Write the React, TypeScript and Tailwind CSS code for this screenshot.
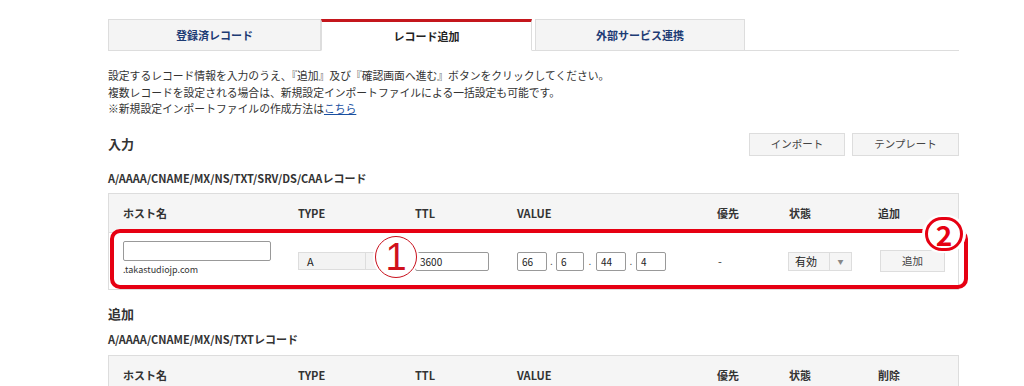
import React from 'react';

const font = { fontFamily: '"Noto Sans CJK JP", "Liberation Sans", sans-serif' };

const cols = 'grid grid-cols-[175px_117px_102px_200px_72px_89px_1fr] items-center pl-[14px]';

const HeaderRow: React.FC<{ last: string }> = ({ last }) => (
  <div className={`${cols} h-[38px] bg-[#f5f5f5] text-[11px] font-bold text-[#333]`}>
    <span>ホスト名</span>
    <span>TYPE</span>
    <span>TTL</span>
    <span>VALUE</span>
    <span>優先</span>
    <span>状態</span>
    <span>{last}</span>
  </div>
);

const Octet: React.FC<{ v: string; w: string }> = ({ v, w }) => (
  <div className={`${w} h-[19px] border border-[#999] rounded-[2px] bg-white text-[10px] leading-[17px] pl-[4px] text-[#222]`}>
    {v}
  </div>
);

export default function App() {
  return (
    <div style={font} className="w-[1024px] h-[386px] overflow-hidden bg-white text-[#333]">
      <div className="ml-[108px] w-[851px] pt-[19px]">
        {/* tabs */}
        <div className="flex h-[32px] border-b border-[#ddd]">
          <div className="w-[213px] -mb-px flex items-center justify-center bg-[#f4f4f4] border border-[#ddd] text-[11px] font-bold text-[#1d3b74]">
            登録済レコード
          </div>
          <div className="w-[211px] -mb-px flex items-center justify-center bg-white border-t-[3px] border-t-[#c4161c] border-l border-r border-[#ddd] border-b border-b-white text-[11px] font-bold text-[#222]">
            レコード追加
          </div>
          <div className="ml-[3px] w-[210px] -mb-px flex items-center justify-center bg-[#f4f4f4] border border-[#ddd] text-[11px] font-bold text-[#1d3b74]">
            外部サービス連携
          </div>
        </div>

        {/* intro */}
        <div className="mt-[16px] text-[10.8px] leading-[16.5px] text-[#333]">
          <p>設定するレコード情報を入力のうえ、『追加』及び『確認画面へ進む』ボタンをクリックしてください。</p>
          <p>複数レコードを設定される場合は、新規設定インポートファイルによる一括設定も可能です。</p>
          <p>
            ※新規設定インポートファイルの作成方法は
            <a className="text-[#1a4fa0] underline">こちら</a>
          </p>
        </div>

        {/* 入力 */}
        <div className="mt-[16px] flex items-center justify-between h-[23px]">
          <h2 className="text-[13px] font-bold text-[#333]">入力</h2>
          <div className="flex gap-[7px]">
            <button className="w-[96px] h-[23px] bg-[#f5f5f5] border border-[#ddd] text-[10.5px] text-[#444]">インポート</button>
            <button className="w-[107px] h-[23px] bg-[#f5f5f5] border border-[#ddd] text-[10.5px] text-[#444]">テンプレート</button>
          </div>
        </div>
        <h3 className="mt-[14px] text-[11px] font-bold text-[#333]">A/AAAA/CNAME/MX/NS/TXT/SRV/DS/CAAレコード</h3>

        {/* input table */}
        <div className="relative mt-[7px] border border-[#ddd]">
          <HeaderRow last="追加" />
          <div className={`${cols} h-[57px] bg-white border-t border-[#ddd]`}>
            <div className="flex flex-col -mt-[4px]">
              <div className="w-[148px] h-[20px] border border-[#999] rounded-[2px] bg-white" />
              <span className="mt-[2px] text-[9px] text-[#333]">.takastudiojp.com</span>
            </div>
            <div className="flex w-[90px] h-[18px] border border-[#ddd] bg-[#f3f3f3] text-[11px] text-[#222]">
              <span className="flex-1 pl-[8px] leading-[16px]">A</span>
              <span className="w-[22px] border-l border-[#ddd]" />
            </div>
            <div className="w-[74px] h-[19px] border border-[#999] rounded-[2px] bg-white text-[10px] leading-[17px] pl-[4px] text-[#222]">3600</div>
            <div className="flex items-center text-[10px] text-[#555]">
              <Octet v="66" w="w-[30px]" />
              <span className="w-[9px] text-center leading-[24px]">.</span>
              <Octet v="6" w="w-[28px]" />
              <span className="w-[12px] text-center leading-[24px]">.</span>
              <Octet v="44" w="w-[30px]" />
              <span className="w-[10px] text-center leading-[24px]">.</span>
              <Octet v="4" w="w-[30px]" />
            </div>
            <span className="text-[11px] pl-[1px]">-</span>
            <div className="-ml-[1px] flex w-[64px] h-[19px] border border-[#ddd] bg-[#f5f5f5] text-[11px] text-[#222]">
              <span className="flex-1 pl-[6px] leading-[17px]">有効</span>
              <span className="w-[22px] border-l border-[#ddd] flex items-center justify-center text-[6px] text-[#888]">▼</span>
            </div>
            <button className="ml-[2px] w-[65px] h-[22px] bg-[#f5f5f5] border border-[#ddd] text-[10.5px] text-[#444]">追加</button>
          </div>

          {/* annotation frame */}
          <div className="absolute left-[1px] top-[35px] w-[858px] h-[60px] border-4 border-[#e60012] rounded-[10px] pointer-events-none" />
          {/* ① */}
          <div className="absolute left-[266px] top-[42px] w-[42px] h-[42px] rounded-full bg-white border-[1.5px] border-[#c8101c] flex items-center justify-center text-[38px] leading-none text-[#d0101c] ring-2 ring-white font-['Liberation_Sans',sans-serif]">
            <span className="-mt-[1px]">1</span>
          </div>
          {/* ② */}
          <div className="absolute left-[813px] top-[21px] w-[44px] h-[38px] rounded-full bg-white flex items-center justify-center">
            <div className="w-[38px] h-[34px] rounded-full border-[3px] border-[#e60012] flex items-center justify-center text-[28px] font-bold leading-none text-[#e60012]">
              2
            </div>
          </div>
        </div>

        {/* 追加 */}
        <h2 className="mt-[14px] text-[13px] font-bold text-[#333]">追加</h2>
        <h3 className="mt-[7px] text-[11px] font-bold text-[#333]">A/AAAA/CNAME/MX/NS/TXTレコード</h3>
        <div className="mt-[8px] border border-[#ddd]">
          <HeaderRow last="削除" />
        </div>
      </div>
    </div>
  );
}
